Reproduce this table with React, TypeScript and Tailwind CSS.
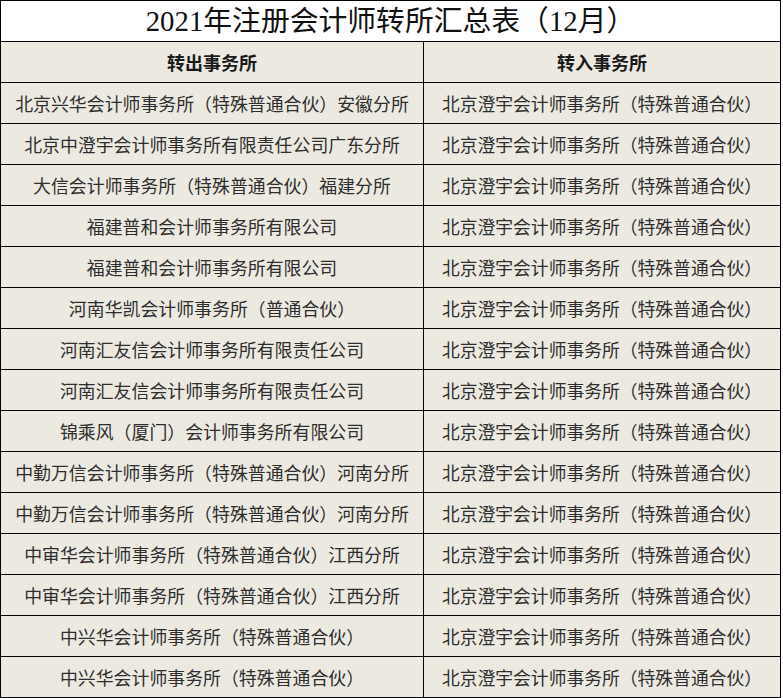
const rows: [string, string][] = [
  ['北京兴华会计师事务所（特殊普通合伙）安徽分所', '北京澄宇会计师事务所（特殊普通合伙）'],
  ['北京中澄宇会计师事务所有限责任公司广东分所', '北京澄宇会计师事务所（特殊普通合伙）'],
  ['大信会计师事务所（特殊普通合伙）福建分所', '北京澄宇会计师事务所（特殊普通合伙）'],
  ['福建普和会计师事务所有限公司', '北京澄宇会计师事务所（特殊普通合伙）'],
  ['福建普和会计师事务所有限公司', '北京澄宇会计师事务所（特殊普通合伙）'],
  ['河南华凯会计师事务所（普通合伙）', '北京澄宇会计师事务所（特殊普通合伙）'],
  ['河南汇友信会计师事务所有限责任公司', '北京澄宇会计师事务所（特殊普通合伙）'],
  ['河南汇友信会计师事务所有限责任公司', '北京澄宇会计师事务所（特殊普通合伙）'],
  ['锦乘风（厦门）会计师事务所有限公司', '北京澄宇会计师事务所（特殊普通合伙）'],
  ['中勤万信会计师事务所（特殊普通合伙）河南分所', '北京澄宇会计师事务所（特殊普通合伙）'],
  ['中勤万信会计师事务所（特殊普通合伙）河南分所', '北京澄宇会计师事务所（特殊普通合伙）'],
  ['中审华会计师事务所（特殊普通合伙）江西分所', '北京澄宇会计师事务所（特殊普通合伙）'],
  ['中审华会计师事务所（特殊普通合伙）江西分所', '北京澄宇会计师事务所（特殊普通合伙）'],
  ['中兴华会计师事务所（特殊普通合伙）', '北京澄宇会计师事务所（特殊普通合伙）'],
  ['中兴华会计师事务所（特殊普通合伙）', '北京澄宇会计师事务所（特殊普通合伙）'],
];

export default function App() {
  return (
    <div className="w-[783px] h-[698px] bg-white font-['Noto_Sans_CJK_SC',sans-serif]">
      <div className="w-[781px] border-x border-b border-black">
        {/* 标题 */}
        <div className="h-[41px] border-t border-black bg-white flex items-center justify-center font-['Liberation_Serif','Noto_Sans_CJK_SC',serif] text-[28.8px] text-[#111] leading-none">
          2021年注册会计师转所汇总表（12月）
        </div>

        {/* 表头 */}
        <div className="h-[41px] border-t border-black bg-[#ece9e1] flex text-[18px] font-bold text-[#1a1a1a]">
          <div className="w-[423px] border-r border-black flex items-center justify-center">转出事务所</div>
          <div className="flex-1 flex items-center justify-center">转入事务所</div>
        </div>

        {rows.map(([from, to], i) => (
          <div key={i} className="h-[41px] border-t border-black bg-[#ece9e1] flex text-[#2e2e2e]">
            <div className="w-[423px] border-r border-black flex items-center justify-center text-[17.9px] whitespace-nowrap">
              {from}
            </div>
            <div className="flex-1 flex items-center justify-center text-[17.8px] whitespace-nowrap">
              {to}
            </div>
          </div>
        ))}
      </div>
    </div>
  );
}
